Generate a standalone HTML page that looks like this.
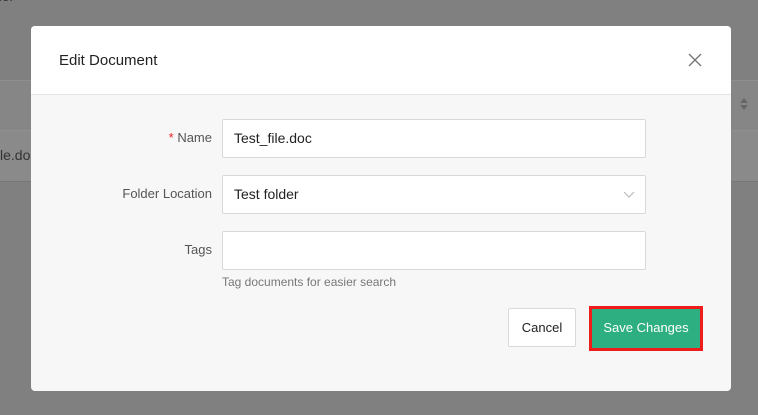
<!DOCTYPE html>
<html><head><style>
body{margin:0;width:758px;height:415px;background:#808080;position:relative;overflow:hidden;font-family:"Liberation Sans","Noto Sans CJK KR",sans-serif;}
.abs{position:absolute}
.modal{left:31px;top:26px;width:700px;height:365px;border-radius:4px;background:#f7f7f7;overflow:hidden}
.hdr{left:0;top:0;width:700px;height:68px;background:#fff;border-bottom:1px solid #e6e6e6}
.lbl{font-size:13px;color:#555;text-align:right;width:200px;left:-19px}
.inp{left:191px;background:#fff;border:1px solid #d9d9d9;border-radius:2px;font-size:14px;color:#222;line-height:37px;padding-left:11px;box-sizing:border-box;width:424px;height:39px}
</style></head><body>
<div class="abs" style="left:0;top:80px;width:758px;height:50px;background:#868686;border-top:1px solid #8e8e8e"></div>
<div class="abs" style="left:0;top:130px;width:758px;height:50px;background:#8a8a8a;border-top:1px solid #909090;border-bottom:1px solid #777"></div>
<div class="abs" style="left:0;top:147px;font-size:14px;color:#333">le.doc</div>
<div class="abs" style="left:-6px;top:-12px;font-size:14px;color:#333">der</div>
<div class="abs" style="left:740px;top:98px;width:0;height:0;border:4px solid transparent;border-bottom:5px solid #666;border-top:0"></div>
<div class="abs" style="left:740px;top:105px;width:0;height:0;border:4px solid transparent;border-top:5px solid #666;border-bottom:0"></div>
<div class="abs modal">
 <div class="abs hdr"></div>
 <div class="abs" style="left:28px;top:26px;font-size:15px;color:#222">Edit Document</div>
 <svg class="abs" style="left:656px;top:26px" width="16" height="16"><path d="M2 2L14 14M14 2L2 14" stroke="#777" stroke-width="1.4"/></svg>
 <div class="abs lbl" style="top:104px"><span style="color:#e22">*</span> Name</div>
 <div class="abs inp" style="top:93px">Test_file.doc</div>
 <div class="abs lbl" style="top:160px">Folder Location</div>
 <div class="abs inp" style="top:149px">Test folder</div>
 <svg class="abs" style="left:592px;top:165px" width="12" height="8"><path d="M1 1L6 6L11 1" stroke="#bbb" fill="none" stroke-width="1.2"/></svg>
 <div class="abs lbl" style="top:216px">Tags</div>
 <div class="abs inp" style="top:205px"></div>
 <div class="abs" style="left:191px;top:249px;font-size:12px;color:#777">Tag documents for easier search</div>
 <div class="abs" style="left:477px;top:282px;width:68px;height:39px;box-sizing:border-box;background:#fff;border:1px solid #d9d9d9;border-radius:2px;font-size:13px;color:#222;text-align:center;line-height:37px">Cancel</div>
 <div class="abs" style="left:558px;top:280px;width:114px;height:45px;box-sizing:border-box;border:3px solid #f01c1c;background:#2eaf82;color:#fff;font-size:13px;text-align:center;line-height:37px">Save Changes</div>
</div>
</body></html>
